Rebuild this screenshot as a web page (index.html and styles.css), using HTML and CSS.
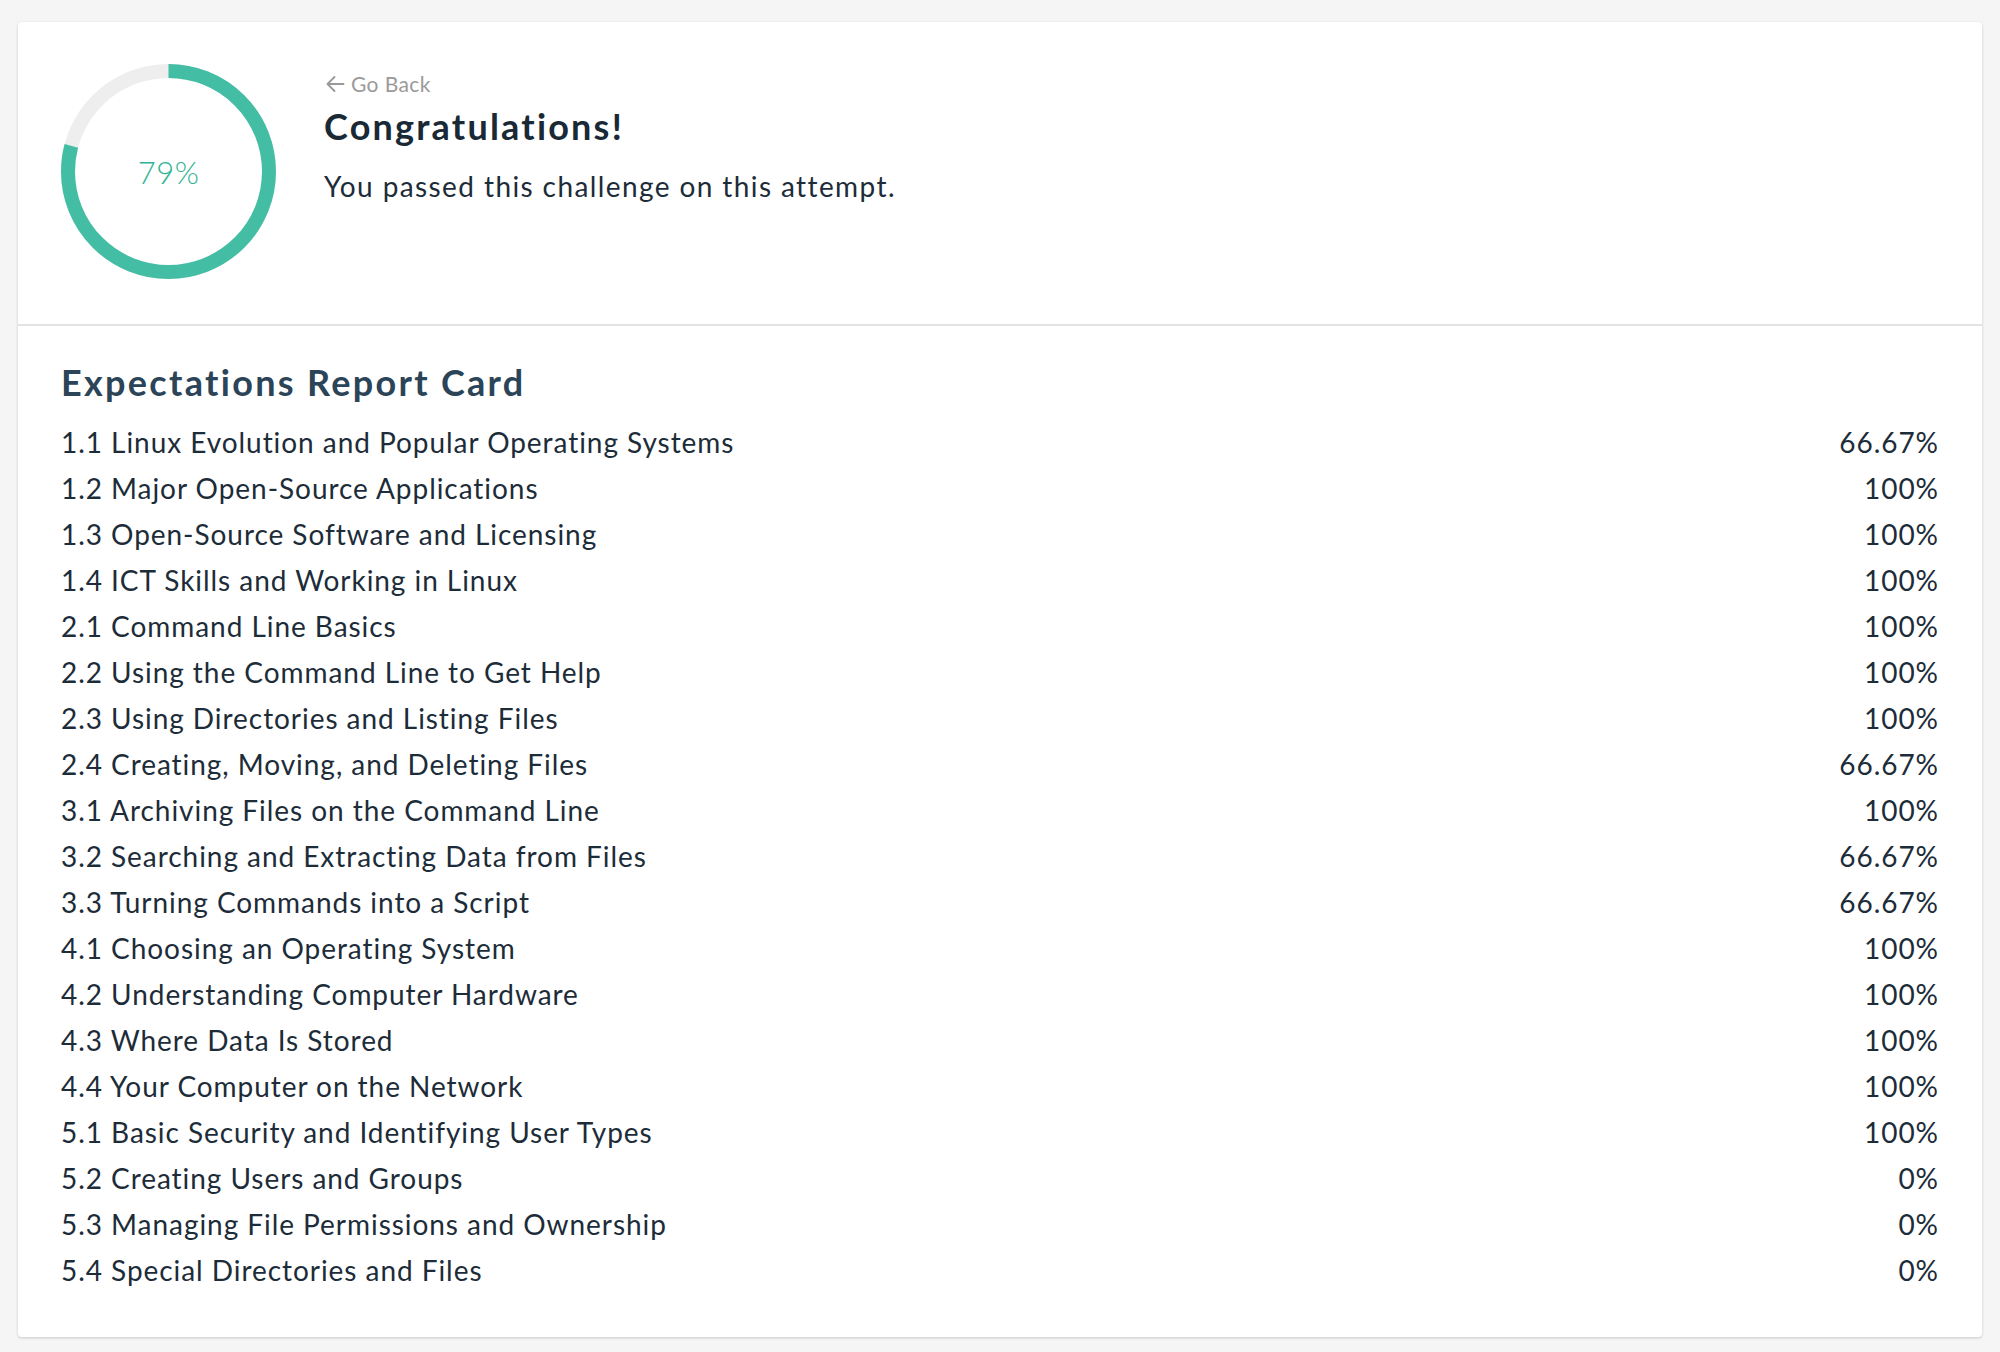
FILE: index.html
```html
<!DOCTYPE html>
<html lang="en">
<head>
<meta charset="utf-8">
<title>Challenge Result</title>
<link rel="stylesheet" href="styles.css">
</head>
<body>
<main class="card">
  <section class="summary">
    <div class="ring">
      <svg class="ring-svg" width="215" height="215" viewBox="0 0 215 215">
        <circle class="ring-track" cx="107.5" cy="107.5" r="100.5"></circle>
        <circle class="ring-value" cx="107.5" cy="107.5" r="100.5" stroke-dasharray="498.84 631.46" transform="rotate(-90 107.5 107.5)"></circle>
      </svg>
      <span class="ring-label">79%</span>
    </div>
    <div class="summary-text">
      <a class="back" href="#">
        <svg class="back-icon" width="22" height="22" viewBox="0 0 22 22"><path d="M19.5 11H3.5M10.5 4L3.5 11l7 7" fill="none" stroke="#9a9a9a" stroke-width="1.9" stroke-linecap="round" stroke-linejoin="round"/></svg>
        <span>Go Back</span>
      </a>
      <h1 class="title">Congratulations!</h1>
      <p class="message">You passed this challenge on this attempt.</p>
    </div>
  </section>
  <section class="report">
    <h2 class="report-title">Expectations Report Card</h2>
    <ul class="rows">
      <li class="row"><span>1.1 Linux Evolution and Popular Operating Systems</span><span>66.67%</span></li>
      <li class="row"><span>1.2 Major Open-Source Applications</span><span>100%</span></li>
      <li class="row"><span>1.3 Open-Source Software and Licensing</span><span>100%</span></li>
      <li class="row"><span>1.4 ICT Skills and Working in Linux</span><span>100%</span></li>
      <li class="row"><span>2.1 Command Line Basics</span><span>100%</span></li>
      <li class="row"><span>2.2 Using the Command Line to Get Help</span><span>100%</span></li>
      <li class="row"><span>2.3 Using Directories and Listing Files</span><span>100%</span></li>
      <li class="row"><span>2.4 Creating, Moving, and Deleting Files</span><span>66.67%</span></li>
      <li class="row"><span>3.1 Archiving Files on the Command Line</span><span>100%</span></li>
      <li class="row"><span>3.2 Searching and Extracting Data from Files</span><span>66.67%</span></li>
      <li class="row"><span>3.3 Turning Commands into a Script</span><span>66.67%</span></li>
      <li class="row"><span>4.1 Choosing an Operating System</span><span>100%</span></li>
      <li class="row"><span>4.2 Understanding Computer Hardware</span><span>100%</span></li>
      <li class="row"><span>4.3 Where Data Is Stored</span><span>100%</span></li>
      <li class="row"><span>4.4 Your Computer on the Network</span><span>100%</span></li>
      <li class="row"><span>5.1 Basic Security and Identifying User Types</span><span>100%</span></li>
      <li class="row"><span>5.2 Creating Users and Groups</span><span>0%</span></li>
      <li class="row"><span>5.3 Managing File Permissions and Ownership</span><span>0%</span></li>
      <li class="row"><span>5.4 Special Directories and Files</span><span>0%</span></li>
    </ul>
  </section>
</main>
</body>
</html>
```
FILE: styles.css
```css
* { box-sizing: border-box; }

html, body {
  margin: 0;
  padding: 0;
  background: #f5f5f5;
}

body {
  font-family: "Lato", "Open Sans", sans-serif;
  color: #1d2c39;
  padding: 22px 18px 15px;
}

.card {
  background: #ffffff;
  border-radius: 4px;
  box-shadow: 0 1px 3px rgba(0, 0, 0, 0.18);
}

.summary {
  display: flex;
  align-items: flex-start;
  gap: 48px;
  padding: 42px 43px 45px;
  border-bottom: 2px solid #e3e3e3;
}

.ring {
  position: relative;
  width: 215px;
  height: 215px;
  flex: none;
}

.ring-svg { display: block; }

.ring-track {
  fill: none;
  stroke: #eeeeee;
  stroke-width: 14;
}

.ring-value {
  fill: none;
  stroke: #43bea5;
  stroke-width: 14;
}

.ring-label {
  position: absolute;
  inset: 0;
  display: flex;
  align-items: center;
  justify-content: center;
  font-size: 31px;
  font-weight: 300;
  letter-spacing: 0.5px;
  color: #2fb394;
}

.summary-text {
  display: flex;
  flex-direction: column;
  padding-top: 8px;
}

.back {
  display: flex;
  align-items: center;
  gap: 5px;
  color: #9a9a9a;
  text-decoration: none;
  font-size: 21px;
  line-height: 24px;
  letter-spacing: 0.4px;
}

.title {
  margin: 8px 0 0;
  font-size: 36px;
  line-height: 44px;
  font-weight: 700;
  letter-spacing: 2.2px;
  color: #192935;
}

.message {
  margin: 20px 0 0;
  font-size: 28px;
  line-height: 36px;
  font-weight: 400;
  letter-spacing: 1.4px;
  color: #1d2c39;
}

.report {
  padding: 34px 43px 44px 43px;
}

.report-title {
  margin: 0 0 15px;
  font-size: 36px;
  line-height: 44px;
  font-weight: 700;
  letter-spacing: 2.3px;
  color: #2b4457;
}

.rows {
  list-style: none;
  margin: 0;
  padding: 0;
}

.row {
  display: flex;
  justify-content: space-between;
  font-size: 28px;
  line-height: 46px;
  letter-spacing: 0.95px;
  color: #1d2c39;
}
```
